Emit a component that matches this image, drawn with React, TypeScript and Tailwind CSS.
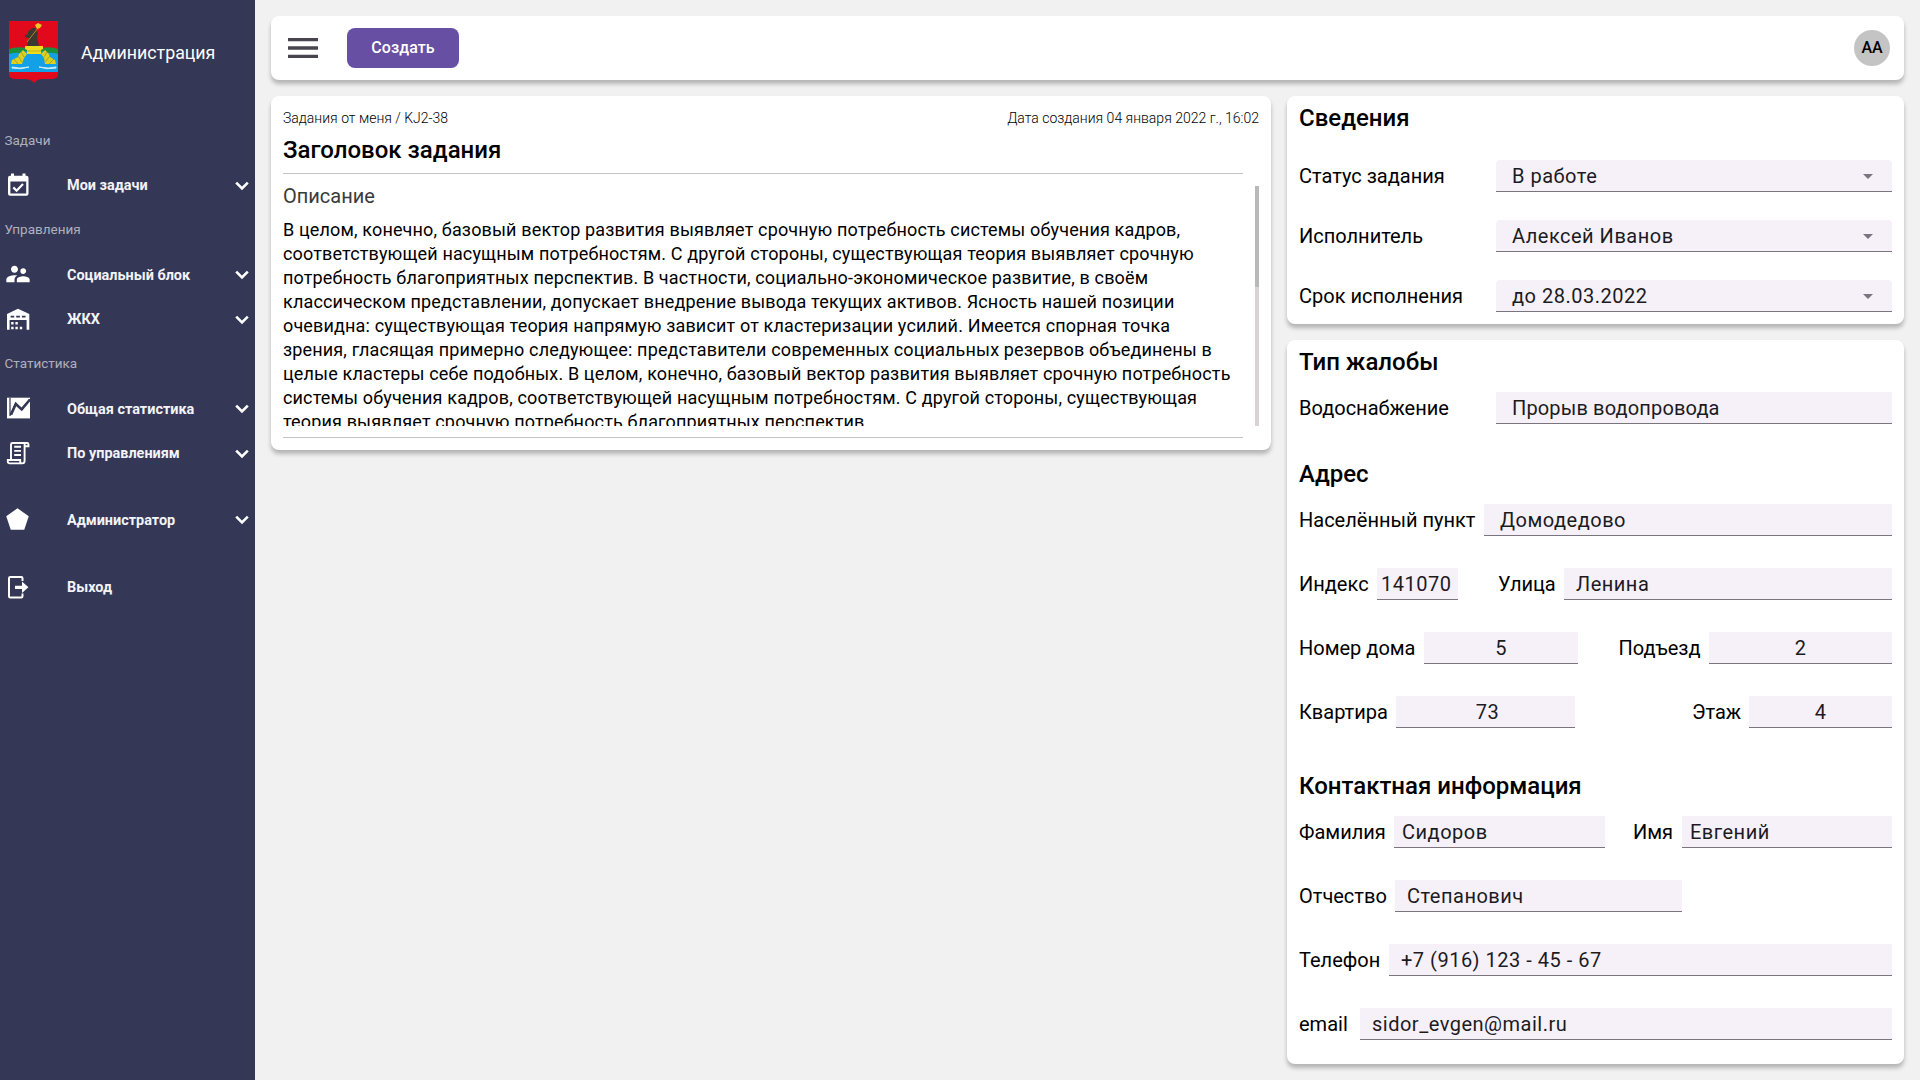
import React from 'react';
import { MdSupervisorAccount, MdPentagon, MdArrowDropDown } from 'react-icons/md';

function Crest() {
  return (
    <svg width="50" height="62" viewBox="0 0 50 62" className="block">
      <path d="M0 0H49V54Q49 57.5 43 58H34Q28 58 25 62Q22 58 16 58H6Q0 57.5 0 54Z" fill="#e1091c" />
      <path d="M0 28Q8 25 17 27H33Q42 25 49 28V35H0Z" fill="#1c8f3c" />
      <path d="M0 33Q6 31 12 32L17 30H33L38 32Q44 31 49 33V51H0Z" fill="#12a0e6" />
      <path d="M18 25L20 17Q15 17 16 14Q17 13 19 14Q18 10 22 8Q26 5 27 9L29 12L28 16L30 25Z" fill="#3c3a30" />
      <path d="M18 21L29 7" stroke="#a28a20" strokeWidth="1" fill="none" />
      <path d="M26 4L29 2L33 4L31 7L28 8Z" fill="#e9c51f" />
      <path d="M16 25H34V28L32 29V33H18V29L16 28Z" fill="#f0dc1e" />
      <path d="M18 30H32" stroke="#b3a51c" strokeWidth=".8" />
      <path d="M14 29L10 33L9 36L3 39L2 43H13L15 37L18 33ZM36 29L40 33L41 36L46 39L47 43H36L35 37L32 33Z" fill="#ddd01e" />
      <path d="M5 38L9 43M9 35L13 41M12 31L15 36M45 38L40 43M41 35L36 41M38 31L35 36" stroke="#9c9a1c" strokeWidth=".8" />
      <path d="M3 46Q10 48 20 46Q12 49 3 47ZM30 46Q40 48 47 46V47Q38 49 30 46Z" fill="#d5eef8" stroke="#d5eef8" strokeWidth=".9" />
    </svg>
  );
}

function CalendarIcon() {
  return (
    <svg width="24" height="24" viewBox="0 0 24 24" className="shrink-0">
      <path
        d="M4 2.7H5V.5H8V2.7H16.5V.5H19.5V2.7H20.5Q22.5 2.7 22.5 4.7V20.7Q22.5 22.7 20.5 22.7H4Q2 22.7 2 20.7V4.7Q2 2.7 4 2.7ZM4.4 8.6V20.4H20.2V8.6Z"
        fill="currentColor"
        fillRule="evenodd"
      />
      <path d="M7.3 14.4L10.6 17.7L17 11" fill="none" stroke="currentColor" strokeWidth="2.2" />
    </svg>
  );
}

function WarehouseIcon() {
  return (
    <svg width="24" height="24" viewBox="0 0 24 24" fill="currentColor" fillRule="evenodd" className="shrink-0">
      <path d="M1 7L12 1.8L23.3 7V22.7H20.6V13H3.6V22.7H1ZM4.6 8.8V10.6H8.2V8.8ZM10.2 8.8V10.6H13.9V8.8ZM15.9 8.8V10.6H19.6V8.8Z" />
      <path d="M5.2 15H7.6V17.4H5.2ZM9.4 15H11.8V17.4H9.4ZM5.2 19.8H7.6V22.2H5.2ZM9.4 19.8H11.8V22.2H9.4ZM13.8 19.8H16.2V22.2H13.8Z" />
    </svg>
  );
}

function ChartIcon() {
  return (
    <svg width="24" height="24" viewBox="0 0 24 24" className="shrink-0">
      <path d="M1 1.7H24V22.4H1Z" fill="currentColor" />
      <path d="M4 1.7V20M4.4 19L9.6 7.6L15.7 13.2L23.8 3.4" fill="none" stroke="#343856" strokeWidth="1.2" />
      <path d="M5 18.6L9.8 8L15.7 13.4L24 3.6" fill="none" stroke="#343856" strokeWidth="2.6" />
    </svg>
  );
}

function ScrollIcon() {
  return (
    <svg width="24" height="24" viewBox="0 0 24 24" fill="none" stroke="currentColor" strokeWidth="1.9" className="shrink-0">
      <path d="M5 18V3.5Q5 2 6.5 2H21Q22.5 2 22.5 3.5V5.2H18.6" />
      <path d="M18.6 3V19.8Q18.6 22.4 16.3 22.4H3.8Q1.8 22.4 1.8 20.4V19H14.2V20.4Q14.2 22.4 16.3 22.4" />
      <path d="M8.2 5.8H15M8.2 9.9H15M8.2 14H15" />
    </svg>
  );
}

function ExitIcon() {
  return (
    <svg width="24" height="24" viewBox="0 0 24 24" className="shrink-0">
      <path d="M16.5 6V3.2Q16.5 2 15.3 2H4.2Q3 2 3 3.2V21.2Q3 22.4 4.2 22.4H15.3Q16.5 22.4 16.5 21.2V18.4" fill="none" stroke="currentColor" strokeWidth="2" />
      <path d="M9 10.7H16V6.6L22.4 12.3L16 18V13.9H9Z" fill="currentColor" />
    </svg>
  );
}

function Chevron() {
  return (
    <svg width="14" height="11" viewBox="0 0 14 11" className="shrink-0">
      <path d="M1.2 2.6L7 8.4L12.8 2.6" fill="none" stroke="currentColor" strokeWidth="2.6" />
    </svg>
  );
}

function Section({ children }: { children: string }) {
  return <div className="flex h-[44.7px] items-center pb-px pl-[4.5px] text-[13.5px] text-[#aeb0bc]">{children}</div>;
}

function NavItem({ icon, label, arrow = true }: { icon: React.ReactNode; label: string; arrow?: boolean }) {
  return (
    <div className="flex h-[44.7px] items-center pl-1.5 pr-[6.5px] text-white">
      <span className="-ml-px flex w-6 justify-center pl-px">{icon}</span>
      <span className="ml-[38px] flex-1 pt-0.5 text-[14.45px] font-bold text-[#f3f3f6]">{label}</span>
      {arrow && <Chevron />}
    </div>
  );
}

type FieldProps = { className: string; children: string; select?: boolean };

function Field({ className, children, select = false }: FieldProps) {
  return (
    <div className={`flex h-8 items-center border-b border-[#79747e] bg-[#f6f1f9] text-[20px] text-[#1c1b1f] ${className}`}>
      <span className={select ? 'flex-1' : ''}>{children}</span>
      {select && <MdArrowDropDown size={24} className="text-[#79747e]" />}
    </div>
  );
}

const card = 'bg-white rounded-lg shadow-[0_4px_4px_rgba(0,0,0,0.25)]';
const row = 'flex items-center text-[20px] text-black';
const spaced = 'tracking-[0.5px]';

export default function App() {
  return (
    <div className="flex h-[1080px] w-[1920px] overflow-hidden bg-[#f1f1f1] font-['Roboto',sans-serif]">
      <aside className="w-[255px] bg-[#343856]">
        <div className="flex h-[118px] items-start pl-[9px] pt-[21px]">
          <Crest />
          <span className="ml-[22px] mt-[18px] text-[17.8px] leading-7 text-white">Администрация</span>
        </div>
        <Section>Задачи</Section>
        <NavItem icon={<CalendarIcon />} label="Мои задачи" />
        <Section>Управления</Section>
        <NavItem icon={<MdSupervisorAccount size={28} className="shrink-0" />} label="Социальный блок" />
        <NavItem icon={<WarehouseIcon />} label="ЖКХ" />
        <Section>Статистика</Section>
        <NavItem icon={<ChartIcon />} label="Общая статистика" />
        <NavItem icon={<ScrollIcon />} label="По управлениям" />
        <div className="h-[22px]" />
        <NavItem icon={<MdPentagon size={27} className="shrink-0" />} label="Администратор" />
        <div className="h-[22px]" />
        <NavItem icon={<ExitIcon />} label="Выход" arrow={false} />
      </aside>
      <main className="flex flex-1 flex-col gap-4 py-4 pl-4">
        <header className={`flex h-16 w-[1633px] items-center pl-[17px] pr-[14px] ${card}`}>
          <svg width="30" height="20" viewBox="0 0 18 12" fill="#49454f">
            <path d="M0 0H18V2H0ZM0 5H18V7H0ZM0 10H18V12H0Z" />
          </svg>
          <button className="ml-[29px] h-10 w-28 rounded-lg bg-[#6750a4] text-[16px] font-medium tracking-[0.1px] text-white">Создать</button>
          <div className="ml-auto flex h-9 w-9 items-center justify-center rounded-full bg-[#c4c4c4] text-[16px] font-medium">AA</div>
        </header>
        <div className="flex items-start gap-4">
          <section className={`h-[354px] w-[1000px] px-3 pt-3 ${card}`}>
            <div className="flex h-5 items-center justify-between text-[14px] font-light text-black">
              <span>Задания от меня / KJ2-38</span>
              <span>Дата создания 04 января 2022 г., 16:02</span>
            </div>
            <h1 className="mt-1 h-[42px] w-[960px] border-b border-[#c4c4c4] text-[24px] font-medium leading-[36px]">Заголовок задания</h1>
            <div className="mt-2 flex h-[244px] justify-between">
              <div className="w-[960px] overflow-hidden">
                <h2 className="h-9 text-[20px] leading-7 text-[#3a3a3a]">Описание</h2>
                <p className="text-[18px] leading-6 tracking-[0.15px] text-black">
                  В целом, конечно, базовый вектор развития выявляет срочную потребность системы обучения кадров,<br />
                  соответствующей насущным потребностям. С другой стороны, существующая теория выявляет срочную<br />
                  потребность благоприятных перспектив. В частности, социально-экономическое развитие, в своём<br />
                  классическом представлении, допускает внедрение вывода текущих активов. Ясность нашей позиции<br />
                  очевидна: существующая теория напрямую зависит от кластеризации усилий. Имеется спорная точка<br />
                  зрения, гласящая примерно следующее: представители современных социальных резервов объединены в<br />
                  целые кластеры себе подобных. В целом, конечно, базовый вектор развития выявляет срочную потребность<br />
                  системы обучения кадров, соответствующей насущным потребностям. С другой стороны, существующая<br />
                  теория выявляет срочную потребность благоприятных перспектив.
                </p>
              </div>
              <div className="mt-1 w-1 bg-[#d9d3d5]">
                <div className="h-[101px] bg-[#b8b8b8]" />
              </div>
            </div>
            <div className="mt-[11px] h-px w-[960px] bg-[#c4c4c4]" />
          </section>
          <div className="flex w-[617px] flex-col gap-4">
            <section className={`h-[228px] px-3 pt-2 ${card}`}>
              <h2 className="mb-7 text-[24px] font-medium leading-7">Сведения</h2>
              <div className="flex flex-col gap-7">
                <div className={row}><span className="w-[197px]">Статус задания</span><Field select className={`flex-1 rounded-t pl-4 pr-3 ${spaced}`}>В работе</Field></div>
                <div className={row}><span className="w-[197px]">Исполнитель</span><Field select className={`flex-1 rounded-t pl-4 pr-3 ${spaced}`}>Алексей Иванов</Field></div>
                <div className={row}><span className="w-[197px]">Срок исполнения</span><Field select className={`flex-1 rounded-t pl-4 pr-3 ${spaced}`}>до 28.03.2022</Field></div>
              </div>
            </section>
            <section className={`h-[724px] px-3 pt-2 ${card}`}>
              <h2 className="mb-4 text-[24px] font-medium leading-7">Тип жалобы</h2>
              <div className={row}><span className="w-[197px]">Водоснабжение</span><Field className="flex-1 pl-4 tracking-[0.15px]">Прорыв водопровода</Field></div>
              <h2 className="mb-4 mt-9 text-[24px] font-medium leading-7">Адрес</h2>
              <div className="flex flex-col gap-8">
                <div className={row}><span className="w-[185px]">Населённый пункт</span><Field className={`flex-1 pl-4 ${spaced}`}>Домодедово</Field></div>
                <div className={row}>
                  <span className="w-[78px]">Индекс</span><Field className={`w-[81px] pl-1 ${spaced}`}>141070</Field>
                  <span className="ml-10 w-[66px]">Улица</span><Field className={`flex-1 pl-3 ${spaced}`}>Ленина</Field>
                </div>
                <div className={row}>
                  <span className="w-[125px]">Номер дома</span><Field className={`w-[154px] justify-center ${spaced}`}>5</Field>
                  <span className="ml-[40.5px] w-[90.5px]">Подъезд</span><Field className={`flex-1 justify-center ${spaced}`}>2</Field>
                </div>
                <div className={row}>
                  <span className="w-[97px]">Квартира</span><Field className={`w-[179px] justify-center pl-1 ${spaced}`}>73</Field>
                  <span className="ml-auto w-[57px]">Этаж</span><Field className={`w-[143px] justify-center ${spaced}`}>4</Field>
                </div>
              </div>
              <h2 className="mb-4 mt-11 text-[24px] font-medium leading-7">Контактная информация</h2>
              <div className="flex flex-col gap-8">
                <div className={row}>
                  <span className="w-[95px]">Фамилия</span><Field className={`w-[211px] pl-2 ${spaced}`}>Сидоров</Field>
                  <span className="ml-auto w-[49px]">Имя</span><Field className={`w-[210px] pl-2 ${spaced}`}>Евгений</Field>
                </div>
                <div className={row}><span className="w-24">Отчество</span><Field className={`w-[287px] pl-3 ${spaced}`}>Степанович</Field></div>
                <div className={row}><span className="w-[90px]">Телефон</span><Field className={`flex-1 pl-3 ${spaced}`}>+7 (916) 123 - 45 - 67</Field></div>
                <div className={row}><span className="w-[61px]">email</span><Field className={`flex-1 pl-3 ${spaced}`}>sidor_evgen@mail.ru</Field></div>
              </div>
            </section>
          </div>
        </div>
      </main>
    </div>
  );
}
